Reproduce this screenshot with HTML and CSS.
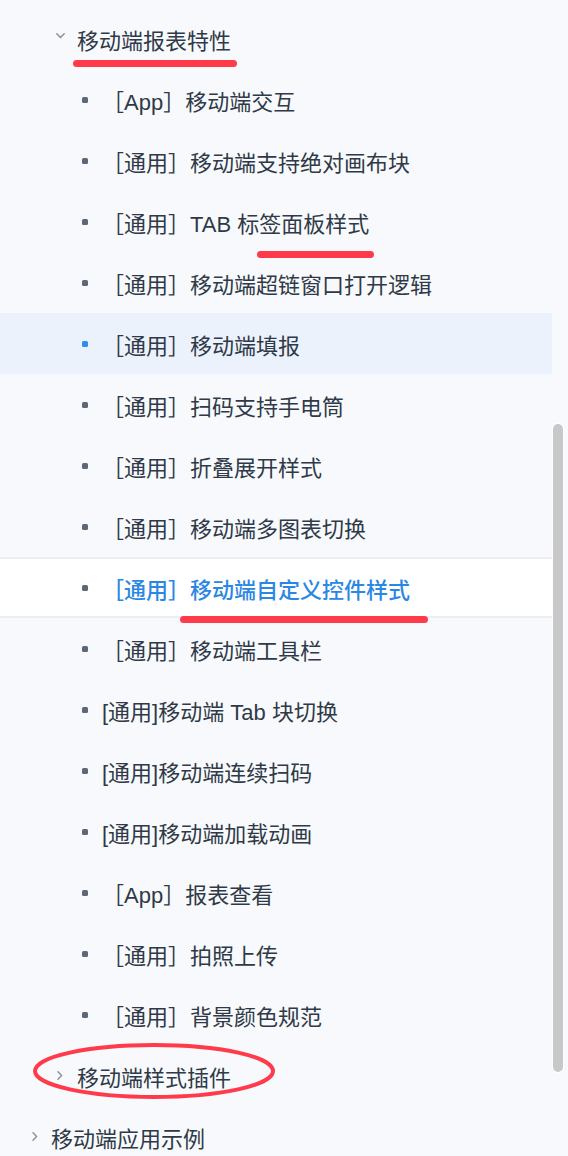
FILE: index.html
```html
<!DOCTYPE html>
<html lang="zh-CN">

<head>
  <meta charset="UTF-8" />
  <title>移动端报表特性</title>
  <link rel="stylesheet" href="styles.css">
</head>

<body>
  <div class="page">
    <div class="tree">
      <!--展开的目录-->
      <div class="node-title lv1">
        <svg class="arrow-down" width="9" height="6" viewBox="0 0 9 6"><polyline points="0.8,0.8 4.5,4.6 8.2,0.8" /></svg>
        <span>移动端报表特性</span>
      </div>
      <ul class="leaf-list">
        <li class="leaf"><i class="dot"></i>［App］移动端交互</li>
        <li class="leaf"><i class="dot"></i>［通用］移动端支持绝对画布块</li>
        <li class="leaf"><i class="dot"></i>［通用］TAB 标签面板样式</li>
        <li class="leaf"><i class="dot"></i>［通用］移动端超链窗口打开逻辑</li>
        <li class="leaf hover"><i class="dot"></i>［通用］移动端填报</li>
        <li class="leaf"><i class="dot"></i>［通用］扫码支持手电筒</li>
        <li class="leaf"><i class="dot"></i>［通用］折叠展开样式</li>
        <li class="leaf"><i class="dot"></i>［通用］移动端多图表切换</li>
        <li class="leaf current"><i class="dot"></i>［通用］移动端自定义控件样式</li>
        <li class="leaf"><i class="dot"></i>［通用］移动端工具栏</li>
        <li class="leaf"><i class="dot"></i>[通用]移动端 Tab 块切换</li>
        <li class="leaf"><i class="dot"></i>[通用]移动端连续扫码</li>
        <li class="leaf"><i class="dot"></i>[通用]移动端加载动画</li>
        <li class="leaf"><i class="dot"></i>［App］报表查看</li>
        <li class="leaf"><i class="dot"></i>［通用］拍照上传</li>
        <li class="leaf"><i class="dot"></i>［通用］背景颜色规范</li>
      </ul>
      <!--收起的目录-->
      <div class="node-title lv1">
        <svg class="arrow-right" width="9" height="9" viewBox="0 0 9 9"><polyline points="2,0.8 5.6,4.5 2,8.2" /></svg>
        <span>移动端样式插件</span>
      </div>
      <div class="node-title lv0">
        <svg class="arrow-right" width="9" height="9" viewBox="0 0 9 9"><polyline points="2,0.8 5.6,4.5 2,8.2" /></svg>
        <span>移动端应用示例</span>
      </div>
    </div>

    <!--滚动条-->
    <div class="scroll-thumb"></div>

    <!--红色标注-->
    <span class="mark mark-title"></span>
    <span class="mark mark-tab"></span>
    <span class="mark mark-current"></span>
    <svg class="mark-ring" width="250" height="64" viewBox="0 0 250 64">
      <ellipse cx="122" cy="31" rx="119" ry="26" />
    </svg>
  </div>
</body>

</html>
```

FILE: styles.css
```css
* {
  padding: 0;
  margin: 0;
  list-style: none;
  border: 0;
  box-sizing: border-box;
}

body {
  background: #f7f9fc;
  font-family: "Liberation Sans", "Noto Sans CJK SC", sans-serif;
  font-size: 22px;
  color: #2f3947;
}

.page {
  position: relative;
  width: 568px;
  height: 1156px;
  overflow: hidden;
}

.tree {
  width: 552px;
  padding-top: 8px;
}

.node-title,
.leaf {
  display: flex;
  align-items: center;
  height: 61px;
  white-space: nowrap;
}

.node-title svg {
  fill: none;
  stroke: #8a93a2;
  stroke-width: 1.5;
  stroke-linecap: round;
  stroke-linejoin: round;
}

.lv1 {
  padding-left: 56px;
}

.lv1 .arrow-down {
  margin-right: 12px;
  margin-top: -5px;
}

.lv1 .arrow-right {
  margin-right: 12px;
}

.lv0 {
  padding-left: 31px;
}

.lv0 .arrow-right {
  margin-right: 11px;
}

.leaf {
  padding-left: 82px;
}

.leaf .dot {
  width: 6px;
  height: 6px;
  border-radius: 1.5px;
  background: #5d6778;
  margin-right: 14px;
}

.leaf.hover {
  background: #ebf2fc;
}

.leaf.hover .dot {
  background: #2f8cf0;
}

.leaf.current {
  background: #fff;
  border-top: 2px solid #eceef1;
  border-bottom: 2px solid #eceef1;
  color: #2a87e4;
  font-weight: 500;
}

.scroll-thumb {
  position: absolute;
  left: 553px;
  top: 424px;
  width: 10px;
  height: 648px;
  background: #c8c8c8;
  border-radius: 5px;
  box-shadow: 0 0 0 1px #fff;
}

.mark {
  position: absolute;
  height: 7px;
  border-radius: 4px;
  background: #ff3b4b;
}

.mark-title {
  left: 73px;
  top: 60px;
  width: 164px;
}

.mark-tab {
  left: 257px;
  top: 251px;
  width: 117px;
}

.mark-current {
  left: 180px;
  top: 616px;
  width: 248px;
}

.mark-ring {
  position: absolute;
  left: 32px;
  top: 1040px;
  fill: none;
  stroke: #ff3b4b;
  stroke-width: 4;
}
```
